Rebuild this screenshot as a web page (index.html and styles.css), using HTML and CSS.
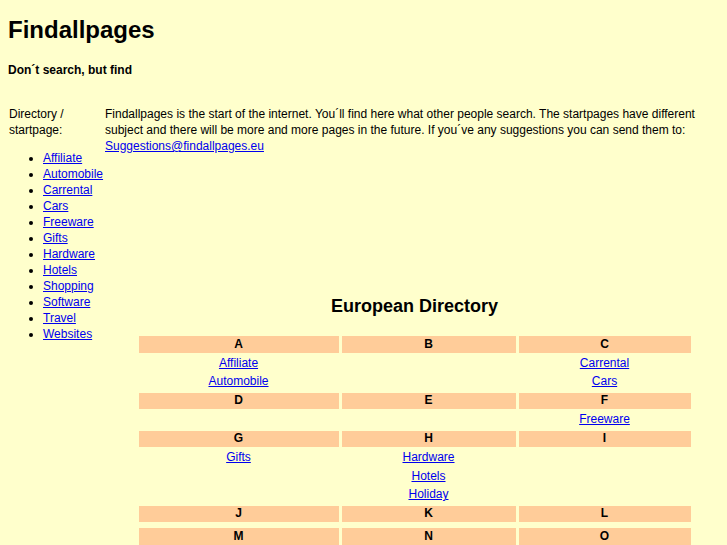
FILE: index.html
```html
<!DOCTYPE html>
<html lang="en">
<head>
    <meta charset="UTF-8">
    <title>Findallpages</title>
    <link rel="stylesheet" href="styles.css">
</head>
<body>
    <h1>Findallpages</h1>
    <h2>Don´t search, but find</h2>

    <div class="layout">
        <div class="sidebar">
            <p class="side-title">Directory / startpage:</p>
            <ul class="side-list">
                <li><a href="#">Affiliate</a></li>
                <li><a href="#">Automobile</a></li>
                <li><a href="#">Carrental</a></li>
                <li><a href="#">Cars</a></li>
                <li><a href="#">Freeware</a></li>
                <li><a href="#">Gifts</a></li>
                <li><a href="#">Hardware</a></li>
                <li><a href="#">Hotels</a></li>
                <li><a href="#">Shopping</a></li>
                <li><a href="#">Software</a></li>
                <li><a href="#">Travel</a></li>
                <li><a href="#">Websites</a></li>
            </ul>
        </div>

        <div class="main">
            <p class="intro">Findallpages is the start of the internet. You´ll find here what other people search. The startpages have different subject and there will be more and more pages in the future. If you´ve any suggestions you can send them to: <a href="#">Suggestions@findallpages.eu</a></p>

            <h3 class="dir-title">European Directory</h3>

            <table class="directory">
                <colgroup>
                    <col class="col-a">
                    <col class="col-b">
                    <col class="col-c">
                </colgroup>
                <tr class="letters"><th>A</th><th>B</th><th>C</th></tr>
                <tr><td><a href="#">Affiliate</a></td><td></td><td><a href="#">Carrental</a></td></tr>
                <tr><td><a href="#">Automobile</a></td><td></td><td><a href="#">Cars</a></td></tr>
                <tr class="letters"><th>D</th><th>E</th><th>F</th></tr>
                <tr><td></td><td></td><td><a href="#">Freeware</a></td></tr>
                <tr class="letters"><th>G</th><th>H</th><th>I</th></tr>
                <tr><td><a href="#">Gifts</a></td><td><a href="#">Hardware</a></td><td></td></tr>
                <tr><td></td><td><a href="#">Hotels</a></td><td></td></tr>
                <tr><td></td><td><a href="#">Holiday</a></td><td></td></tr>
                <tr class="letters"><th>J</th><th>K</th><th>L</th></tr>
                <tr class="spacer"><td></td><td></td><td></td></tr>
                <tr class="letters"><th>M</th><th>N</th><th>O</th></tr>
                <tr class="spacer"><td></td><td></td><td></td></tr>
                <tr class="letters"><th>P</th><th>Q</th><th>R</th></tr>
            </table>
        </div>
    </div>
</body>
</html>
```

FILE: styles.css
```css
body {
    margin: 0;
    padding: 8px;
    background-color: #ffffcc;
    font-family: "Liberation Sans", Arial, sans-serif;
    font-size: 12px;
    color: #000;
}

a {
    color: #0000ee;
}

h1 {
    font-size: 24px;
    margin: 8px 0 0 0;
}

h2 {
    font-size: 12px;
    margin: 19px 0 0 0;
}

.layout {
    display: flex;
    margin: 29px -5px 0 0;
    line-height: 16px;
}

.sidebar {
    width: 96px;
    flex-shrink: 0;
    padding-left: 1px;
}

.side-title {
    margin: 0;
}

.side-list {
    margin: 12px 0 0 0;
    padding-left: 34px;
}

.main {
    flex: 1;
}

.intro {
    margin: 0;
    padding-right: 5px;
}

.dir-title {
    font-size: 18px;
    text-align: center;
    margin: 142px 0 0 0;
    line-height: normal;
}

.directory {
    table-layout: fixed;
    width: 558px;
    margin: 16px auto 0 auto;
    border-spacing: 3px;
    line-height: 15px;
}

.col-a { width: 200px; }
.col-b { width: 174px; }
.col-c { width: 172px; }

.directory th {
    background-color: #ffcc99;
    padding: 0;
    height: 16.5px;
}

.directory td {
    text-align: center;
    padding: 0;
    height: 15.5px;
}

.directory .spacer td {
    height: 0;
    line-height: 0;
}
```
